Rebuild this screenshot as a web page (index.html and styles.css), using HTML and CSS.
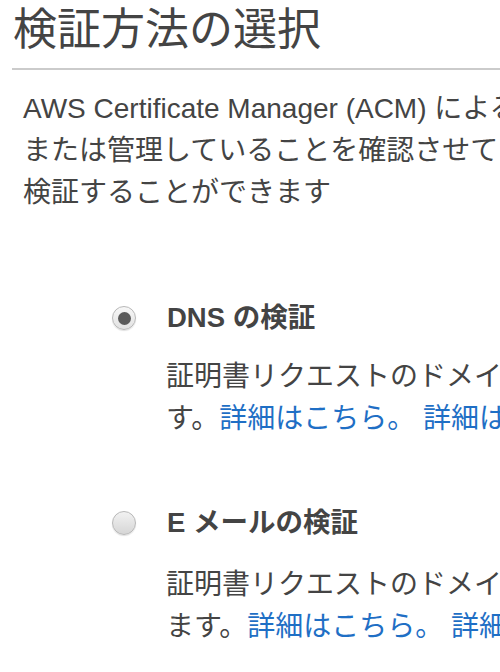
FILE: index.html
```html
<!DOCTYPE html>
<html lang="ja">
<head>
<meta charset="utf-8">
<link rel="stylesheet" href="styles.css">
</head>
<body>
<div class="page">
  <h1 class="title">検証方法の選択</h1>
  <p class="intro">AWS Certificate Manager (ACM) による証明書の発行前に、お客様がドメインを所有<br>または管理していることを確認させていただく必要があります。ドメインの所有権は<br>検証することができます</p>

  <div class="option">
    <span class="radio checked"></span>
    <div class="option-body">
      <div class="label">DNS の検証</div>
      <div class="desc">証明書リクエストのドメインの DNS 設定を変更する権限がある場合は、これを選択しま<br>す。<a href="#">詳細はこちら。</a> <a href="#">詳細はこちら。</a></div>
    </div>
  </div>

  <div class="option second">
    <span class="radio"></span>
    <div class="option-body">
      <div class="label">E メールの検証</div>
      <div class="desc">証明書リクエストのドメインの所有者に E メールを送信する権限がない場合は、これを選択し<br>ます。<a href="#">詳細はこちら。</a> <a href="#">詳細はこちら。</a></div>
    </div>
  </div>
</div>
</body>
</html>
```
FILE: styles.css
```css
html, body {
  margin: 0;
  padding: 0;
  background: #fff;
  overflow: hidden;
}
body {
  font-family: "Liberation Sans", "Noto Sans CJK JP", sans-serif;
  color: #444;
}
.page {
  width: 1100px;
}
.title {
  margin: 0 0 0 12px;
  padding: 0 0 8px 1px;
  font-size: 44px;
  font-weight: normal;
  line-height: 60px;
  border-bottom: 2px solid #cbcbcb;
  color: #444;
}
.intro {
  margin: 18px 0 0 0;
  padding-left: 23px;
  font-size: 28px;
  line-height: 42px;
  white-space: nowrap;
}
.option {
  display: flex;
  align-items: flex-start;
  margin-top: 83px;
  padding-left: 112px;
  gap: 31px;
}
.option.second {
  margin-top: 62px;
}
.radio {
  flex: none;
  width: 22px;
  height: 22px;
  margin-top: 9px;
  border: 1px solid #b8b8b8;
  border-radius: 50%;
  background: linear-gradient(#f2f2f2, #d6d6d6);
  box-shadow: 0 1px 1px rgba(0,0,0,0.12);
  display: flex;
  align-items: center;
  justify-content: center;
}
.radio.checked {
  background: linear-gradient(#f7f7f7, #e2e2e2);
}
.radio.checked::after {
  content: "";
  width: 13px;
  height: 13px;
  border-radius: 50%;
  background: #5a5a5a;
}
.label {
  font-size: 27.5px;
  font-weight: bold;
  line-height: 42px;
  color: #444;
}
.desc {
  margin-top: 17px;
  margin-left: -1px;
  font-size: 28px;
  line-height: 42px;
  white-space: nowrap;
}
.second .desc {
  margin-top: 20px;
}
.desc a {
  color: #1f6fc5;
  text-decoration: none;
}
```
